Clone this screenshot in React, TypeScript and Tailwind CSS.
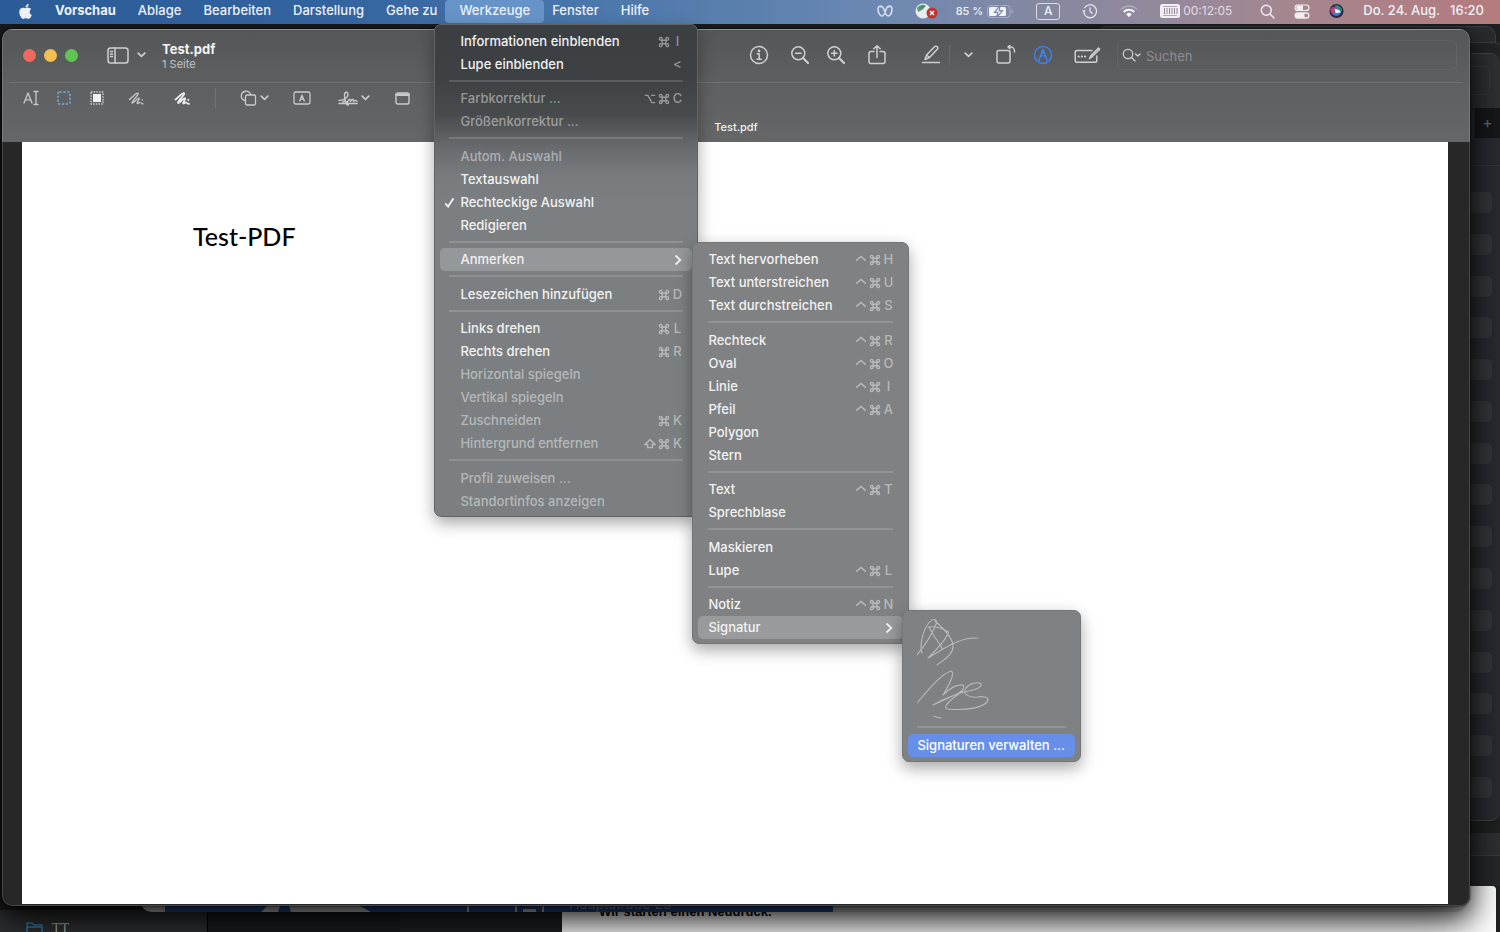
import React from "react";
import { FaApple } from "react-icons/fa";

type Entry =
  | "separator"
  | {
      label: string;
      mods?: string;
      letter?: string;
      disabled?: boolean;
      checked?: boolean;
      active?: boolean;
      submenu?: React.ReactNode;
    };

const toolsMenu: Entry[] = [
  { label: "Informationen einblenden", mods: "⌘", letter: "I" },
  { label: "Lupe einblenden", letter: "<" },
  "separator",
  { label: "Farbkorrektur ...", mods: "⌥⌘", letter: "C", disabled: true },
  { label: "Größenkorrektur ...", disabled: true },
  "separator",
  { label: "Autom. Auswahl", disabled: true },
  { label: "Textauswahl" },
  { label: "Rechteckige Auswahl", checked: true },
  { label: "Redigieren" },
  "separator",
  { label: "Anmerken", active: true, submenu: <AnnotateMenu /> },
  "separator",
  { label: "Lesezeichen hinzufügen", mods: "⌘", letter: "D" },
  "separator",
  { label: "Links drehen", mods: "⌘", letter: "L" },
  { label: "Rechts drehen", mods: "⌘", letter: "R" },
  { label: "Horizontal spiegeln", disabled: true },
  { label: "Vertikal spiegeln", disabled: true },
  { label: "Zuschneiden", mods: "⌘", letter: "K", disabled: true },
  { label: "Hintergrund entfernen", mods: "⇧⌘", letter: "K", disabled: true },
  "separator",
  { label: "Profil zuweisen ...", disabled: true },
  { label: "Standortinfos anzeigen", disabled: true },
];

const annotateEntries: Entry[] = [
  { label: "Text hervorheben", mods: "⌃⌘", letter: "H" },
  { label: "Text unterstreichen", mods: "⌃⌘", letter: "U" },
  { label: "Text durchstreichen", mods: "⌃⌘", letter: "S" },
  "separator",
  { label: "Rechteck", mods: "⌃⌘", letter: "R" },
  { label: "Oval", mods: "⌃⌘", letter: "O" },
  { label: "Linie", mods: "⌃⌘", letter: "I" },
  { label: "Pfeil", mods: "⌃⌘", letter: "A" },
  { label: "Polygon" },
  { label: "Stern" },
  "separator",
  { label: "Text", mods: "⌃⌘", letter: "T" },
  { label: "Sprechblase" },
  "separator",
  { label: "Maskieren" },
  { label: "Lupe", mods: "⌃⌘", letter: "L" },
  "separator",
  { label: "Notiz", mods: "⌃⌘", letter: "N" },
  { label: "Signatur", active: true, submenu: <SignatureMenu /> },
];

function Modifier({ kind }: { kind: string }) {
  return (
    <svg viewBox="0 0 12 12" className="h-3 w-3" fill="none" stroke="currentColor" strokeWidth="1.4" aria-label={kind}>
      {kind === "⌘" && (
        <path d="M4.2 4.2H7.8V7.8H4.2ZM4.2 4.2H2.9A1.4 1.4 0 1 1 4.2 2.9ZM7.8 4.2V2.9A1.4 1.4 0 1 1 9.1 4.2ZM7.8 7.8H9.1A1.4 1.4 0 1 1 7.8 9.1ZM4.2 7.8V9.1A1.4 1.4 0 1 1 2.9 7.8Z" />
      )}
      {kind === "⌃" && <path d="M1.2 6.6 6 2.4l4.800 4.200" />}
      {kind === "⌥" && <path d="M.8 2.4h3.1l4 7.2h3.3M7 2.4h4.2" />}
      {kind === "⇧" && <path d="M6 1.4 11 6.5H8.4V9.6H3.6V6.5H1Z" />}
    </svg>
  );
}

function MenuList({ entries, wide }: { entries: Entry[]; wide?: boolean }) {
  return (
    <>
      {entries.map((e, i) =>
        e === "separator" ? (
          <li key={i} role="separator" className={`flex min-h-[11px] grow items-center ${wide ? "px-[14px]" : "px-[15px]"}`}>
            <span className="h-[2px] w-full bg-white/15" />
          </li>
        ) : (
          <li key={i} className="relative px-[5px]">
            <button
              type="button"
              disabled={e.disabled}
              className={`relative flex h-[23px] w-full items-center rounded-[5px] pr-[10px] pt-[2px] text-left ${wide ? "pl-5" : "pl-[10px]"} ${
                e.active ? "bg-white/20" : ""
              } ${e.disabled ? "text-white/45" : "text-[#f1f2f2]"}`}
            >
              {e.checked && (
                <svg viewBox="0 0 10 11" className="absolute left-1 h-[11px] w-[11px]" fill="none" stroke="currentColor" strokeWidth="1.8" aria-hidden="true">
                  <path d="M.8 6.3 3.6 9.6 9 1.2" />
                </svg>
              )}
              <span className="grow whitespace-nowrap">{e.label}</span>
              {e.letter && (
                <span className="flex items-center gap-[2px] text-white/45">
                  {Array.from(e.mods ?? "").map((m) => (
                    <Modifier key={m} kind={m} />
                  ))}
                  <span className="w-[10px] text-center">{e.letter}</span>
                </span>
              )}
              {e.submenu && (
                <svg viewBox="0 0 8 12" className="h-3 w-2" fill="none" stroke="currentColor" strokeWidth="1.8" aria-hidden="true">
                  <path d="M1.5 1.5 6.3 6 1.5 10.5" />
                </svg>
              )}
            </button>
            {e.submenu}
          </li>
        ),
      )}
    </>
  );
}

function ToolsMenu() {
  return (
    <ul className="absolute -left-[11px] top-[25px] flex min-h-[493px] w-[264px] flex-col rounded-[7px] border border-[#606467] bg-[linear-gradient(180deg,#3b3f42_0px,#3d4143_50px,#484b4d_90px,#676b6d_122px,#777b7d_150px,#7b7f81_180px)] py-1 text-[13px] shadow-[0_6px_16px_rgba(0,0,0,0.35)]">
      <MenuList entries={toolsMenu} wide />
    </ul>
  );
}

function AnnotateMenu() {
  return (
    <ul className="absolute -top-[6px] left-[257px] flex min-h-[402px] w-[217px] flex-col rounded-[7px] border border-[#747576] bg-[#808182] pb-1 pt-[5px] shadow-[0_6px_16px_rgba(0,0,0,0.35)]">
      <MenuList entries={annotateEntries} />
    </ul>
  );
}

function SignatureMenu() {
  return (
    <ul className="absolute -top-[6px] left-[209px] flex w-[179px] flex-col rounded-[7px] border border-[#747576] bg-[#808182] px-[5px] pb-1 pt-[3px] shadow-[0_6px_16px_rgba(0,0,0,0.35)]">
      <li className="h-[52px] px-[9px] pt-1">
        <button type="button" aria-label="Signatur 1" className="block">
          <svg viewBox="0 0 62 48" className="h-12 w-[62px]" fill="none" stroke="#b9babb" strokeWidth="1.1" strokeLinecap="round" strokeLinejoin="round">
            <path d="M0 37C8 27 16 15 19.500 5c.5-4-3.500-5-7-1C7 10 2 26 5 35M11 9c6-1 14 1 20.500 5C29 22 20 31 11 40 28 30 42 19 61 20M18 3c8 7 17 16 18 24 1 9-8 14-16 20M12 9c4 8 8 14 12 19l1 3" />
          </svg>
        </button>
      </li>
      <li className="h-[54px] px-[9px] pt-1">
        <button type="button" aria-label="Signatur 2" className="block">
          <svg viewBox="0 0 74 50" className="h-[50px] w-[74px]" fill="none" stroke="#b9babb" strokeWidth="1.1" strokeLinecap="round" strokeLinejoin="round">
            <path d="M0 33C11 20 23 5 34 1c4 1 0 11-8 24 6-6 13-11 20-10 3 2-2 7-6 9L16 35c12-7 25-12 40-15 5-1 9-4 8-6-3-3-12 0-15 4-4 6 3 10 11 9 6-1 11 0 11 3-2 7-20 11-41 9-5-2 4-10 16-18M17 46c3 2 4 2 7 2" />
          </svg>
        </button>
      </li>
      <li role="separator" className="flex h-[14px] items-center px-[9px]">
        <span className="h-[2px] w-full bg-white/15" />
      </li>
      <li>
        <button type="button" className="flex h-[23px] w-full items-center whitespace-nowrap rounded-[5px] bg-[#678fea] px-[9px] pt-px text-white">
          Signaturen verwalten ...
        </button>
      </li>
    </ul>
  );
}

function MenuBar() {
  const item = "whitespace-nowrap";
  return (
    <header className="relative z-20 flex h-6 shrink-0 items-center justify-between bg-[linear-gradient(90deg,#2c5c98_0%,#33639e_22%,#4876ab_38%,#5b80ad_50%,#6f89b2_60%,#86889f_70%,#94899c_78%,#a5868f_86%,#b47b7d_100%)] pl-[18px] pr-4 text-[13px] font-medium text-[#edf1f6]">
      <nav aria-label="Menüleiste" className="flex h-6 items-center gap-[22px] pb-[2px]">
        <button type="button" aria-label="Apple">
          <FaApple className="h-[17px] w-[15px]" />
        </button>
        <button type="button" className={`${item} font-bold`}>Vorschau</button>
        <button type="button" className={item}>Ablage</button>
        <button type="button" className={item}>Bearbeiten</button>
        <button type="button" className={item}>Darstellung</button>
        <button type="button" className={item}>Gehe zu</button>
        <div className="relative -mx-[14px] h-6">
          <button type="button" className="mt-px h-[23px] rounded-[4px] bg-[#6794c8] px-[14px] pb-[2px]">Werkzeuge</button>
          <ToolsMenu />
        </div>
        <button type="button" className={item}>Fenster</button>
        <button type="button" className={item}>Hilfe</button>
      </nav>
      <div className="flex h-6 items-center gap-7 pb-[2px]">
        <div className="flex items-center gap-[22px]">
          <svg viewBox="0 0 16 12" className="h-3 w-4" fill="none" stroke="#d5dceb" strokeWidth="1.600" aria-label="Webex">
            <path d="M5.200 2.200C3 .6 1 1.500 1 4c0 3.500 2 7 4 7s3-3.500 4-6.500S11.500 1 12.500 1C14 1 15 2 15 4c0 3.500-1.600 7-3.800 7-2 0-3.200-3.500-4.200-6.500C6 2 5 1 3.500 1M10.800 2.200C13 .6 15 1.500 15 4" />
          </svg>
          <svg viewBox="0 0 23 16" className="h-4 w-[23px]" aria-label="Netzwerk">
            <circle cx="8" cy="8" r="7.500" fill="#e9edf0" />
            <path d="M2 5c3-4 7-4 9-2L7 7 3 9Z" fill="#5f9c62" />
            <path d="M5 4l4-1-1 3Z" fill="#3f7fb5" />
            <circle cx="17" cy="10" r="5.500" fill="#c1342f" />
            <path d="m15 8 4 4m0-4-4 4" stroke="#fff" strokeWidth="1.400" />
          </svg>
          <div className="-ml-1 flex items-center gap-1 text-[11px]">
            <span className="whitespace-nowrap">85 %</span>
            <svg viewBox="0 0 27 13" className="h-[13px] w-[27px]" aria-label="Batterie">
              <rect x=".5" y=".5" width="22.500" height="12" rx="3" fill="none" stroke="#c3c8d8" strokeOpacity=".6" />
              <path d="M24.500 4.500c2 .5 2 3.500 0 4Z" fill="#c3c8d8" opacity=".6" />
              <rect x="2" y="2" width="17" height="9" rx="1.500" fill="#f2f4f8" />
              <path d="M13 .5 7.500 7.300h3.300L9.500 12.500 15.500 5.700h-3.300Z" fill="#f2f4f8" stroke="#7c89a8" strokeWidth="1.200" />
            </svg>
          </div>
          <span className="flex h-[17px] w-6 items-center justify-center rounded-[3px] border border-[#d9dce6] text-[12px]">A</span>
          <svg viewBox="0 0 16 16" className="h-4 w-4" fill="none" stroke="#e3e3ea" strokeWidth="1.300" aria-label="Time Machine">
            <path d="M2.300 5.200A6.500 6.500 0 1 1 1.600 9M8 4.200V8.300l2.600 2.400" />
            <path d="M.2 7.200h3.600L2 9.800Z" fill="#e3e3ea" stroke="none" />
          </svg>
          <svg viewBox="0 0 18 14" className="h-[14px] w-[18px]" fill="none" aria-label="WLAN">
            <path d="M1 5.200a11.500 11.500 0 0 1 16 0" stroke="#c6c1cf" strokeWidth="1.600" opacity=".6" />
            <path d="M3.700 8a7.600 7.600 0 0 1 10.600 0" stroke="#f4f4f8" strokeWidth="2" />
            <path d="M6.200 10.200a4 4 0 0 1 5.600 0L9 13.300Z" fill="#f4f4f8" />
          </svg>
          <div className="flex items-center gap-[3px]">
            <svg viewBox="0 0 20 14" className="h-[14px] w-5" aria-label="Aufnahme">
              <rect width="20" height="14" rx="2.500" fill="#f2eff4" />
              <path d="M4.500 4v6M7 4v6M9.500 4v6M12 4v6M14.500 4v6M17 4v6" stroke="#94899c" strokeWidth="1" />
              <path d="M3 2.500h14M3 11.500h14" stroke="#94899c" strokeWidth=".7" />
            </svg>
            <span className="text-[12px] font-normal text-[#e3dbe3]">00:12:05</span>
          </div>
        </div>
        <div className="flex items-center gap-[19px]">
          <svg viewBox="0 0 15 15" className="h-[15px] w-[15px]" fill="none" stroke="#f0ebef" strokeWidth="1.500" strokeLinecap="round" aria-label="Suche">
            <circle cx="6.300" cy="6.300" r="5" />
            <path d="m10 10 4 4" />
          </svg>
          <svg viewBox="0 0 16 15" className="h-[15px] w-4" aria-label="Kontrollzentrum">
            <rect x="1" y="1" width="14" height="5.500" rx="2.750" fill="none" stroke="#f2edf0" strokeWidth="1.200" />
            <circle cx="4.500" cy="3.750" r="2.300" fill="#f2edf0" />
            <rect x="3" y="1.500" width="6" height="4.500" fill="#f2edf0" />
            <rect x=".5" y="8.300" width="15" height="6.400" rx="3.200" fill="#f2edf0" />
            <circle cx="12.200" cy="11.500" r="1.900" fill="#a5868f" />
          </svg>
          <svg viewBox="0 0 16 16" className="h-4 w-[15px]" aria-label="Siri">
            <circle cx="8" cy="8" r="7.500" fill="#2c2741" />
            <path d="M1.500 6C4 2 8 3 9 7.500L6 12C3 11 1 9 1.500 6Z" fill="#c0407c" />
            <path d="M6 2c4-1 8 2 8 6L9 7.500Z" fill="#2f8d86" />
            <path d="M3 11c4 4 9 2 10-2L9 7.500Z" fill="#3c7de0" />
            <path d="M6 5.500c3 .5 5 1.500 7 3.500-2 1-4 1.500-6 1Z" fill="#eef4fb" />
          </svg>
          <div className="flex gap-[10px] whitespace-nowrap">
            <span>Do. 24. Aug.</span>
            <span>16:20</span>
          </div>
        </div>
      </div>
    </header>
  );
}

function IconButton({ label, className = "w-9", children }: { label: string; className?: string; children: React.ReactNode }) {
  return (
    <button type="button" aria-label={label} className={`flex h-7 shrink-0 items-center justify-center ${className}`}>
      {children}
    </button>
  );
}

function Icon({ size = "h-5 w-5", box = "0 0 20 20", children }: { size?: string; box?: string; children: React.ReactNode }) {
  return (
    <svg viewBox={box} className={size} fill="none" stroke="currentColor" strokeWidth="1.5" strokeLinecap="round" strokeLinejoin="round" aria-hidden="true">
      {children}
    </svg>
  );
}

function Chevron() {
  return (
    <Icon size="h-[6px] w-[9px]" box="0 0 9 6">
      <path d="M1.200 1.200 4.500 4.300 7.800 1.200" strokeWidth="1.700" />
    </Icon>
  );
}

function TitleRow() {
  return (
    <div className="flex h-[52px] items-center justify-between pb-[2px] pl-[21px] pr-[13px]">
      <div className="flex items-center">
        <div className="flex gap-2">
          <button type="button" aria-label="Schließen" className="h-[13px] w-[13px] rounded-full bg-[#ec6a5e]" />
          <button type="button" aria-label="Minimieren" className="h-[13px] w-[13px] rounded-full bg-[#f4bf4f]" />
          <button type="button" aria-label="Vollbild" className="h-[13px] w-[13px] rounded-full bg-[#5fc454]" />
        </div>
        <button type="button" aria-label="Seitenleiste" className="ml-[29px] flex items-center gap-2">
          <Icon size="h-[17px] w-[22px]" box="0 0 22 17">
            <rect x="1" y="1" width="20" height="15" rx="2.500" />
            <path d="M8 1v15M3.500 4.500h2M3.500 7h2M3.500 9.500h2" />
          </Icon>
          <Chevron />
        </button>
        <div className="ml-4 flex flex-col pt-px">
          <h1 className="text-[13px] font-bold leading-4 text-[#f3f3f3]">Test.pdf</h1>
          <p className="text-[11px] leading-[14px] text-[#c4c4c5]">1 Seite</p>
        </div>
      </div>
      <div className="flex items-center">
        <div className="flex items-center gap-[5px]">
          <IconButton label="Informationen">
            <Icon>
              <circle cx="10" cy="10" r="8.500" />
              <path d="M8.300 8.800H10.200V14M8 14.200h4.300" />
              <circle cx="10" cy="5.900" r=".6" fill="currentColor" />
            </Icon>
          </IconButton>
          <div className="flex">
            <IconButton label="Verkleinern">
              <Icon>
                <circle cx="8.300" cy="8.300" r="6.500" />
                <path d="M5.500 8.300h5.600" />
                <path d="m13.300 13.300 4.700 4.700" strokeWidth="2.200" />
              </Icon>
            </IconButton>
            <IconButton label="Vergrößern">
              <Icon>
                <circle cx="8.300" cy="8.300" r="6.500" />
                <path d="M5.500 8.300h5.600M8.300 5.500v5.600" />
                <path d="m13.300 13.300 4.700 4.700" strokeWidth="2.200" />
              </Icon>
            </IconButton>
          </div>
          <IconButton label="Teilen">
            <Icon>
              <path d="M7 6.500H4A2 2 0 0 0 2 8.500V16.500a2 2 0 0 0 2 2H16a2 2 0 0 0 2-2V8.500A2 2 0 0 0 16 6.500H13M10 12.500V.8M6.800 3.800 10 .8l3.200 3" />
            </Icon>
          </IconButton>
        </div>
        <div className="ml-[18px] flex items-center">
          <IconButton label="Markieren">
            <Icon>
              <path d="M1.500 17.500H18.500M4 14.500 5.500 10 13.500 1.800a1.800 1.800 0 0 1 2.800 2.500L8.500 12.500ZM5.500 10l3 2.500" />
            </Icon>
          </IconButton>
          <span className="-mr-px h-5 w-px bg-white/10" />
          <IconButton label="Markierfarbe" className="w-[38px]">
            <Chevron />
          </IconButton>
          <IconButton label="Drehen" className="w-[38px]">
            <Icon>
              <rect x="1" y="5.500" width="13" height="12.500" rx="2" />
              <path d="M12 2h2.500A4 4 0 0 1 18.500 6v1M14 .2 12 2l2 1.800" />
            </Icon>
          </IconButton>
          <span className="text-[#3d82ec]">
            <IconButton label="Markierungswerkzeuge">
              <Icon>
                <circle cx="10" cy="10" r="8.500" />
                <path d="M5.800 16 9.400 5h1.200L14.200 16M8 11.500c1-1 3-1 4 0M10 5v3.500" />
              </Icon>
            </IconButton>
          </span>
          <IconButton label="Formular ausfüllen" className="w-[52px]">
            <Icon size="h-[18px] w-[27px]" box="0 0 27 18">
              <path d="M18 4.500H3A1.800 1.800 0 0 0 1.200 6.300V14.500A1.800 1.800 0 0 0 3 16.300H21A1.800 1.800 0 0 0 22.800 14.500V10" />
              <path d="M4.500 10.500h.3M7.800 10.500h.3M11 10.500h.3" strokeWidth="2" />
              <path d="m15.500 12.500 1.500-3L24.500 2l1.200 1.200-7.700 7.600Z" />
            </Icon>
          </IconButton>
        </div>
        <label className="ml-1 flex h-[30px] w-[340px] items-center gap-1 rounded-[6px] border border-white/5 pl-1">
          <Icon size="h-[14px] w-5" box="0 0 20 14">
            <circle cx="6" cy="6" r="4.700" strokeWidth="1.300" />
            <path d="m9.500 9.500 3.500 3.500M13.500 6l2.300 2 2.300-2" strokeWidth="1.400" />
          </Icon>
          <input aria-label="Suchen" placeholder="Suchen" className="min-w-0 grow bg-transparent pt-1 text-[13px] outline-none placeholder:text-[#8d8e8f]" />
        </label>
      </div>
    </div>
  );
}

function Scribble({ weight }: { weight: number }) {
  return (
    <Icon size="h-[15px] w-[17px]" box="0 0 17 15">
      <path
        d="M1.500 8.500C4 6.500 8.500 1.500 10 2.200c1.500 1-6.500 8-6 9.600.8 1.400 5.500-5.300 7-4.600 1.200.8-2.600 4.300-1.800 5.200.7.600 1.800-1 3-1M14.200 8.800l.3.200M13.500 12.500l1.500.3"
        strokeWidth={weight}
      />
    </Icon>
  );
}

function MarkupRow() {
  return (
    <div className="mx-[7px] flex h-8 items-center border-t border-white/10 pb-px pl-[5px] text-[#cacacb]">
      <IconButton label="Textauswahl" className="w-[33px]">
        <Icon size="h-4 w-4" box="0 0 16 16">
          <path d="M1 13 5 3l4 10M2.300 9.800h5.400M11 1.500h1.300q.7 0 .7.700V13.800q0 .7-.7.700H11M15 1.500h-1.300q-.7 0-.7.700M13 13.800q0 .7.7.700H15" strokeWidth="1.300" />
        </Icon>
      </IconButton>
      <span className="text-[#6fb1e2]">
        <IconButton label="Rechteckige Auswahl" className="w-[33px]">
          <Icon size="h-[14px] w-[14px]" box="0 0 14 14">
            <rect x="1" y="1" width="12" height="12" rx="1.500" strokeDasharray="2.200 1.600" strokeLinecap="butt" />
          </Icon>
        </IconButton>
      </span>
      <IconButton label="Redigieren" className="w-[33px]">
        <Icon size="h-[14px] w-[14px]" box="0 0 14 14">
          <rect x="1" y="1" width="12" height="12" strokeDasharray="1.500 1.200" strokeLinecap="butt" />
          <rect x="3" y="3" width="8" height="8" fill="#f0f0f0" stroke="none" />
        </Icon>
      </IconButton>
      <IconButton label="Skizzieren" className="w-[46px]">
        <Scribble weight={1.3} />
      </IconButton>
      <span className="text-[#ededed]">
        <IconButton label="Zeichnen" className="w-[46px]">
          <Scribble weight={1.8} />
        </IconButton>
      </span>
      <span className="ml-[10px] mr-[14px] h-5 w-px bg-white/10" />
      <IconButton label="Formen" className="w-12 gap-[3px]">
        <Icon size="h-4 w-[17px]" box="0 0 17 16">
          <path d="M5 10.500A4.700 4.700 0 1 1 10.500 4.500" strokeWidth="1.300" />
          <rect x="5.500" y="5" width="10" height="10" rx="1.500" strokeWidth="1.300" />
        </Icon>
        <Chevron />
      </IconButton>
      <IconButton label="Text" className="w-12">
        <Icon size="h-[14px] w-[18px]" box="0 0 18 14">
          <rect x="1" y="1" width="16" height="12" rx="1.800" strokeWidth="1.300" />
          <path d="M6.700 10 9 4.200 11.300 10M7.500 8.200h3" strokeWidth="1.300" />
        </Icon>
      </IconButton>
      <IconButton label="Unterschreiben" className="w-14 gap-[3px]">
        <Icon size="h-[15px] w-5" box="0 0 20 15">
          <path d="M1 12.500h18M1 9.500c3 0 9-2 9-6C10 .5 6.500.5 6.500 4S8 14.500 10 14c1.800-.5-3-5.500-5-3M9.500 10.500c2-3 3-3 3 0 1.500-3 3-3 3 0 1-1.500 3-1.500 3.500 0" strokeWidth="1.400" />
        </Icon>
        <Chevron />
      </IconButton>
      <IconButton label="Notiz" className="w-10">
        <Icon size="h-[13px] w-[15px]" box="0 0 15 13">
          <rect x="1" y="1" width="13" height="11" rx="1.800" strokeWidth="1.400" />
          <path d="M1.500 2.700h12" strokeWidth="2.400" />
        </Icon>
      </IconButton>
    </div>
  );
}

function PreviewWindow() {
  return (
    <section className="absolute bottom-[26px] left-[2px] right-[30px] top-[5px] flex flex-col overflow-hidden rounded-[10px] bg-[#272727] shadow-[0_0_2px_rgba(0,0,0,0.9),0_8px_20px_rgba(0,0,0,0.5),0_16px_40px_rgba(0,0,0,0.75)]">
      <div className="shrink-0 border-t border-[#7c7d7e] bg-[linear-gradient(180deg,#555658_0%,#5f6062_50%,#656668_100%)] text-[#cfcfd0]">
        <TitleRow />
        <MarkupRow />
        <p className="flex h-7 items-center justify-center pb-[2px] text-[11px] font-medium text-[#f0f0f0]">Test.pdf</p>
      </div>
      <main className="mb-[2px] ml-5 mr-[22px] grow bg-white">
        <p className="pl-[171px] pt-[78px] font-['Lato'] text-[25px] font-medium leading-8 text-black">Test-PDF</p>
      </main>
      <span className="pointer-events-none absolute inset-0 rounded-[10px] border border-white/15" />
    </section>
  );
}

function RearWindows() {
  return (
    <div className="absolute inset-0 overflow-hidden bg-[#1b1c1e]" aria-hidden="true">
      <div className="absolute bottom-0 right-0 top-0 w-[1100px] bg-[#1f2022]" />
      <div className="absolute right-1 top-[2px] h-20 w-[400px] rounded-[10px] border-t border-r border-[#3b3d40] bg-[#2a2c2f]" />
      <div className="absolute -right-1 top-[18px] h-20 w-[400px] rounded-[10px] border-t border-r border-[#3b3d40] bg-[#232527]" />
      <div className="absolute bottom-[76px] right-0 h-[23px] w-[600px] border-b border-[#3a3c40] bg-[#2e3033]" />
      <div className="absolute bottom-[46px] right-0 h-[30px] w-[600px] bg-[#27282c]" />
      <div className="absolute bottom-[111px] right-0 top-[29px] flex w-[300px] flex-col overflow-hidden rounded-r-[10px] border-b border-t border-[#45474b] bg-[#2a2b31]">
        <div className="flex h-[54px] justify-end bg-[#2f3134] pr-[10px] pt-3">
          <span className="h-[29px] w-20 rounded-[6px] border border-white/5" />
        </div>
        <div className="flex h-[30px] justify-end">
          <span className="flex w-[25px] items-center justify-center bg-[#17181b] text-[15px] text-[#6a6c70]">+</span>
        </div>
        <div className="mt-[27px] flex grow flex-col items-end justify-between border-t border-white/5 pb-[22px] pr-2 pt-[26px]">
          {Array.from({ length: 15 }, (_, i) => (
            <span key={i} className="h-[21px] w-16 shrink-0 rounded-[5px] bg-[#36373c]" />
          ))}
        </div>
      </div>
      <div className="absolute -bottom-5 left-[562px] right-1 h-[66px] rounded-r-[4px] bg-white">
        <p className="pl-[37px] pt-4 font-['Liberation_Sans'] text-[13px] font-bold leading-5 text-black">Wir starten einen Neudruck.</p>
      </div>
      <div className="absolute bottom-0 left-0 flex h-[22px] w-[208px] gap-[9px] overflow-hidden border-r border-black bg-[#303133] pl-[26px] pt-[11px]">
        <svg viewBox="0 0 17 14" className="h-[14px] w-[17px] shrink-0" fill="none" stroke="#3a7bb0" strokeWidth="1.5">
          <path d="M1 13V2h5l2 2h8v9M1 6h15" />
        </svg>
        <span className="font-['Liberation_Serif'] text-[14px] leading-4 text-[#b4b4b6]">TT</span>
      </div>
      <div className="absolute bottom-5 left-[141px] right-[33px] flex h-10 items-stretch overflow-hidden rounded-[10px] bg-[#e0e0e0]">
        <div className="ml-6 flex w-[668px] items-end bg-[#2558ac]">
          <svg viewBox="0 0 400 12" className="h-3 w-[400px]" fill="#e4e4e4">
            <path d="M96 12 108 0h9l-4 12ZM126 12 122 0h62l22 12ZM302 0h2v12h-2ZM350 0h2v12h-2ZM358 9h13v3h-13ZM360 3h9v3h-9ZM377 0h2v12h-2Z" />
          </svg>
          <span className="pl-1 text-[14px] leading-4 text-[#a3b0c8]">Hauptstraße 25</span>
        </div>
      </div>
    </div>
  );
}

export default function App() {
  return (
    <div className="flex h-screen flex-col overflow-hidden bg-[#1b1c1e] font-['Inter','Liberation_Sans',sans-serif]">
      <MenuBar />
      <div className="relative grow">
        <RearWindows />
        <PreviewWindow />
      </div>
    </div>
  );
}
